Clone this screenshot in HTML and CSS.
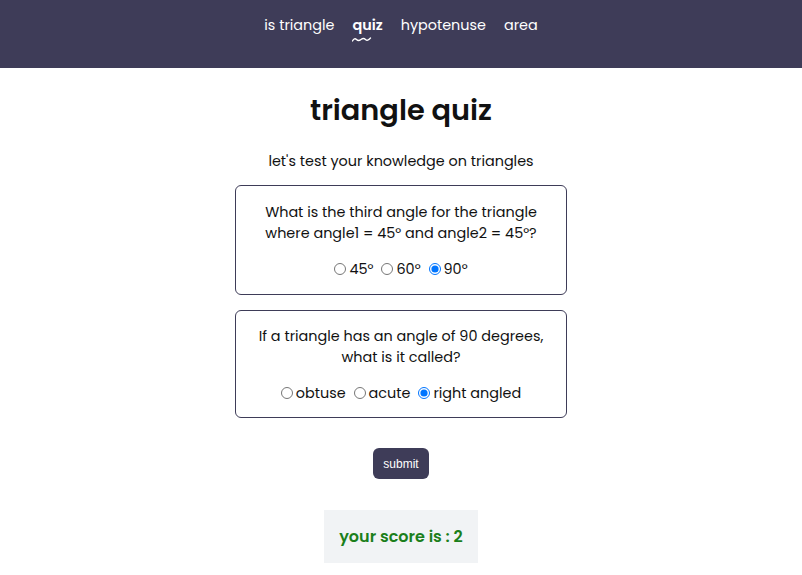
FILE: index.html
```html
<!DOCTYPE html>
<html lang="en">
<head>
<meta charset="utf-8">
<title>triangle quiz</title>
<link rel="stylesheet" href="styles.css">
</head>
<body>
<header class="topbar">
  <nav class="nav">
    <a class="nav-link" href="#">is triangle</a>
    <a class="nav-link active" href="#">quiz<svg class="wave" width="20" height="7" viewBox="0 0 20 7"><path d="M0.5 5 Q2.5 1.5 4.5 3.5 T9 3.5 T13.5 3.5 T18.5 2" fill="none" stroke="#fff" stroke-width="1.3" stroke-linecap="round"/></svg></a>
    <a class="nav-link" href="#">hypotenuse</a>
    <a class="nav-link" href="#">area</a>
  </nav>
</header>
<main class="main">
  <h1 class="title">triangle quiz</h1>
  <p class="lead">let's test your knowledge on triangles</p>
  <form class="quiz">
    <div class="card">
      <p class="question">What is the third angle for the triangle where angle1 = 45° and angle2 = 45°?</p>
      <div class="options">
        <label class="option"><input type="radio" name="q1">45°</label>
        <label class="option"><input type="radio" name="q1">60°</label>
        <label class="option"><input type="radio" name="q1" checked>90°</label>
      </div>
    </div>
    <div class="card card-compact">
      <p class="question">If a triangle has an angle of 90 degrees, what is it called?</p>
      <div class="options">
        <label class="option"><input type="radio" name="q2">obtuse</label>
        <label class="option"><input type="radio" name="q2">acute</label>
        <label class="option"><input type="radio" name="q2" checked>right angled</label>
      </div>
    </div>
    <button class="submit" type="button">submit</button>
  </form>
  <div class="score">your score is : 2</div>
</main>
</body>
</html>
```
FILE: styles.css
```css
* { box-sizing: border-box; }
body {
  margin: 0;
  font-family: "Poppins", "Inter", "Noto Sans", sans-serif;
  color: #111;
  background: #fff;
}
.topbar {
  background: #3e3c58;
  height: 68px;
  display: flex;
  justify-content: center;
  padding-top: 13px;
}
.nav {
  display: flex;
  gap: 18px;
  height: 24px;
}
.nav-link {
  color: #fff;
  text-decoration: none;
  font-size: 14.4px;
  line-height: 24px;
}
.nav-link.active {
  font-weight: 600;
  position: relative;
}
.wave {
  position: absolute;
  left: 0;
  top: 23px;
}
.main {
  display: flex;
  flex-direction: column;
  align-items: center;
}
.title {
  margin: 24px 0 0;
  font-size: 28.8px;
  font-weight: 600;
  line-height: 36px;
}
.lead {
  margin: 23px 0 0;
  font-size: 14.4px;
  line-height: 20px;
}
.quiz {
  display: flex;
  flex-direction: column;
  align-items: center;
  margin-top: 14px;
}
.card {
  width: 332px;
  border: 1px solid #3e3c58;
  border-radius: 6px;
  padding: 16px 16px 15px;
  text-align: center;
  margin-bottom: 15px;
}
.card-compact {
  padding: 15px 16px 14px;
}
.question {
  margin: 0;
  font-size: 14.4px;
  line-height: 21px;
}
.options {
  display: flex;
  justify-content: center;
  gap: 8px;
  margin-top: 15px;
  font-size: 14.4px;
  line-height: 20px;
}
.option {
  display: inline-flex;
  align-items: center;
}
.option input {
  margin: 0 3px 0 0;
  width: 12px;
  height: 12px;
}
.submit {
  margin-top: 15px;
  background: #3e3c58;
  color: #fff;
  border: none;
  border-radius: 6px;
  font-family: "Liberation Sans", Arial, sans-serif;
  font-size: 12px;
  width: 56px;
  height: 31px;
  padding: 0;
}
.score {
  margin-top: 31px;
  background: #f1f3f5;
  color: #1b7f1b;
  font-weight: 600;
  font-size: 16px;
  width: 154px;
  height: 53px;
  display: flex;
  align-items: center;
  justify-content: center;
}
```
